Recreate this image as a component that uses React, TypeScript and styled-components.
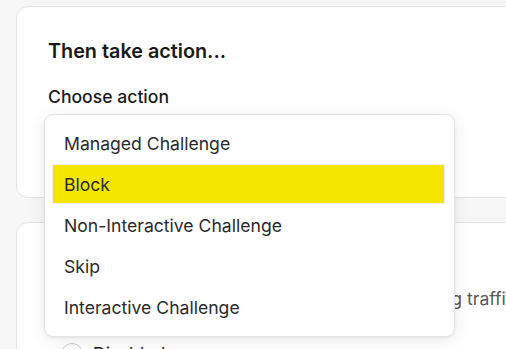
import { createGlobalStyle } from "styled-components";
import styled from "styled-components";

const actions = [
  "Managed Challenge",
  "Block",
  "Non-Interactive Challenge",
  "Skip",
  "Interactive Challenge",
];

const App = () => {
  const selected = "Block";

  return (
    <Page>
      <GlobalStyle />
      <Card>
        <Title>Then take action...</Title>
        <Label>Choose action</Label>
        <Menu>
          {actions.map(action => (
            <MenuItem key={action} $active={action === selected}>
              {action}
            </MenuItem>
          ))}
        </Menu>
      </Card>
      <Card>
        <Title>Rule status</Title>
        <Hint>Turn the rule off to stop it from blocking traffic</Hint>
        <Radio>
          <RadioDot />
          <span>Disabled</span>
        </Radio>
      </Card>
    </Page>
  );
};

const GlobalStyle = createGlobalStyle`
  html, body {
    margin: 0;
    padding: 0;
    background: #f7f7f7;
    overflow: hidden;
  }
  body {
    font-family: Inter, "Liberation Sans", sans-serif;
    color: #1c1c1c;
  }
`;

const Page = styled.div`
  display: flex;
  flex-direction: column;
  gap: 24px;
  padding: 6px 0 0 16px;
  width: 560px;
  height: 349px;
  overflow: hidden;
  position: relative;
`;

const Card = styled.section`
  display: flex;
  flex-direction: column;
  flex-shrink: 0;
  background: #fff;
  border: 1px solid #e3e3e3;
  border-radius: 12px;
  padding: 31px 31px 30px;
  min-height: 129px;
`;

const Title = styled.h2`
  margin: 0;
  font-size: 19.8px;
  line-height: 26px;
  font-weight: 600;
  color: #1a1a1a;
`;

const Label = styled.div`
  margin-top: 21px;
  font-size: 17.6px;
  line-height: 24px;
  font-weight: 500;
  color: #1c1c1c;
`;

const Menu = styled.ul`
  position: absolute;
  top: 114px;
  left: 44px;
  width: 411px;
  box-sizing: border-box;
  margin: 0;
  padding: 9px 10px 10px 8px;
  list-style: none;
  display: flex;
  flex-direction: column;
  gap: 3px;
  background: #fff;
  border: 1px solid #e4e4e4;
  border-radius: 9px;
  box-shadow: 0 4px 18px rgba(0, 0, 0, 0.08), 0 1px 3px rgba(0, 0, 0, 0.06);
  z-index: 2;
`;

const MenuItem = styled.li<{ $active?: boolean }>`
  height: 38px;
  display: flex;
  align-items: center;
  padding-left: 11px;
  font-size: 17.6px;
  color: #2a2a2a;
  background: ${props => (props.$active ? "#f4e600" : "transparent")};
  box-shadow: ${props => (props.$active ? "0 0 0 1px #efefef" : "none")};
`;

const Hint = styled.p`
  margin: 7px 0 0;
  font-size: 17.6px;
  line-height: 24px;
  color: #585858;
  white-space: nowrap;
  padding-left: 84px;
`;

const Radio = styled.label`
  display: flex;
  align-items: center;
  gap: 10px;
  margin-top: 32px;
  margin-left: 13px;
  font-size: 17.6px;
  line-height: 22px;
  color: #1c1c1c;
`;

const RadioDot = styled.span`
  width: 20px;
  height: 20px;
  border-radius: 50%;
  border: 1px solid #c8c8c8;
  background: #fff;
`;

export default App;
